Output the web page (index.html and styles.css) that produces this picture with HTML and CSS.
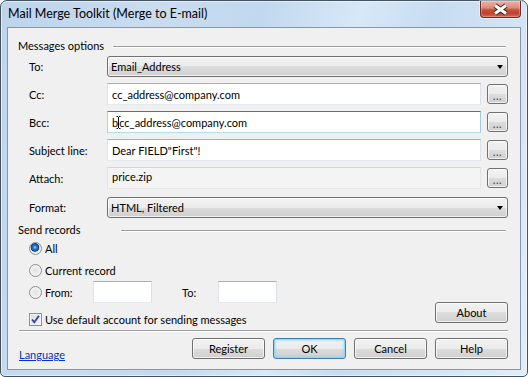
FILE: index.html
```html
<!DOCTYPE html>
<html>
<head>
<meta charset="utf-8">
<link rel="stylesheet" href="styles.css">
</head>
<body>
<div class="window">
  <div class="titlebar">
    <span class="title">Mail Merge Toolkit (Merge to E-mail)</span>
    <div class="close">
      <svg width="39" height="16" viewBox="0 0 39 16">
        <path d="M14 4.5 L25 12.5 M25 4.5 L14 12.5" stroke="#3b2622" stroke-width="5" fill="none"/>
        <path d="M14 4.5 L25 12.5 M25 4.5 L14 12.5" stroke="#ffffff" stroke-width="3" fill="none"/>
      </svg>
    </div>
  </div>
  <div class="client">
    <div class="hdr">
      <span class="hdr-label hdr-label-msg">Messages options</span>
      <span class="hdr-line"></span>
    </div>

    <div class="row row-first">
      <span class="lbl">To:</span>
      <div class="combo"><span class="combo-text">Email_Address</span><span class="arrow"></span></div>
    </div>

    <div class="row">
      <span class="lbl">Cc:</span>
      <div class="input">cc_address@company.com</div>
      <div class="btn dots">...</div>
    </div>

    <div class="row">
      <span class="lbl">Bcc:</span>
      <div class="input focused">b<svg class="ibeam" width="5" height="13" viewBox="0 0 5 13"><path d="M0.5 0.5 H2 M3 0.5 H4.5 M2.5 1 V12 M0.5 12.5 H2 M3 12.5 H4.5" stroke="#000" stroke-width="1" fill="none"/></svg>cc_address@company.com</div>
      <div class="btn dots">...</div>
    </div>

    <div class="row">
      <span class="lbl">Subject line:</span>
      <div class="input">Dear FIELD"First"!</div>
      <div class="btn dots">...</div>
    </div>

    <div class="row">
      <span class="lbl">Attach:</span>
      <div class="input disabled">price.zip</div>
      <div class="btn dots">...</div>
    </div>

    <div class="row row-format">
      <span class="lbl">Format:</span>
      <div class="combo"><span class="combo-text">HTML, Filtered</span><span class="arrow"></span></div>
    </div>

    <div class="hdr">
      <span class="hdr-label hdr-label-send">Send records</span>
      <span class="hdr-line"></span>
    </div>

    <div class="opt">
      <span class="radio checked"></span><span>All</span>
    </div>
    <div class="opt">
      <span class="radio"></span><span>Current record</span>
    </div>
    <div class="opt">
      <span class="radio"></span><span class="from-lbl">From:</span>
      <div class="input small"></div>
      <span class="to-lbl">To:</span>
      <div class="input small"></div>
    </div>

    <div class="check-row">
      <div class="check-item">
        <span class="checkbox">
          <svg width="11" height="11" viewBox="0 0 11 11"><path d="M2 5.5 L4.3 8.3 L9 1.8" stroke="#37479a" stroke-width="1.9" fill="none"/></svg>
        </span>
        <span>Use default account for sending messages</span>
      </div>
      <div class="btn push about">About</div>
    </div>

    <div class="sep"></div>

    <div class="bottom">
      <a class="link" href="#">Language</a>
      <div class="buttons">
        <div class="btn push">Register</div>
        <div class="btn push default">OK</div>
        <div class="btn push">Cancel</div>
        <div class="btn push">Help</div>
      </div>
    </div>
  </div>
</div>
</body>
</html>
```

FILE: styles.css
```css
html, body {
  margin: 0;
  padding: 0;
  background: #ffffff;
}

body {
  font-family: "Segoe UI", Lato, "Liberation Sans", sans-serif;
  font-size: 11px;
  color: #000000;
}

.window {
  box-sizing: border-box;
  width: 528px;
  height: 377px;
  border: 1px solid #45525f;
  border-radius: 7px 7px 5px 5px;
  background: linear-gradient(105deg, #bdd4eb 0%, #c9dcf0 25%, #c2d8ee 42%, #d7e8f7 58%, #c8dcf1 70%, #e0edf9 100%);
  box-shadow: inset 0 0 0 1px rgba(255, 255, 255, 0.55);
  padding: 0 6px 6px 6px;
  display: flex;
  flex-direction: column;
}

.titlebar {
  height: 26px;
  display: flex;
  align-items: flex-start;
  flex: none;
}

.title {
  line-height: 26px;
  padding-left: 1px;
  font-size: 12.5px;
  color: #000;
}

.close {
  box-sizing: border-box;
  margin-left: auto;
  width: 41px;
  height: 17px;
  border: 1px solid #6b2a22;
  border-top: none;
  border-radius: 0 0 4px 4px;
  background: linear-gradient(#eab3a7 0%, #dd8c7b 42%, #c8503b 55%, #c2422c 78%, #d26a54 100%);
  box-shadow: 0 0 0 1px rgba(255, 255, 255, 0.45), inset 0 0 0 1px rgba(255, 255, 255, 0.25);
}

.close svg {
  display: block;
}

.client {
  flex: 1;
  box-sizing: border-box;
  border: 1px solid #8796a8;
  background: #f0f0f0;
  padding: 10px 12px 0 10px;
  display: flex;
  flex-direction: column;
}

.hdr {
  display: flex;
  align-items: flex-start;
  height: 15px;
  line-height: 15px;
  flex: none;
}

.hdr-label {
  flex: none;
}

.hdr-label-msg {
  width: 95px;
}

.hdr-label-send {
  width: 103px;
}

.hdr-line {
  flex: 1;
  margin-top: 8px;
  margin-right: 2px;
  border-top: 1px solid #a0a0a0;
  border-bottom: 1px solid #ffffff;
}

.row {
  display: flex;
  align-items: center;
  height: 28px;
  padding-left: 11px;
  flex: none;
}

.row-first {
  height: 27px;
}

.row-format {
  height: 30px;
}

.lbl {
  width: 78px;
  flex: none;
}

.combo {
  box-sizing: border-box;
  flex: 1;
  height: 21px;
  border: 1px solid #707070;
  border-radius: 3px;
  background: linear-gradient(#f2f2f2 0%, #ebebeb 50%, #dddddd 50%, #cfcfcf 100%);
  box-shadow: inset 0 0 0 1px rgba(255, 255, 255, 0.7);
  display: flex;
  align-items: center;
  padding: 0 4px 0 3px;
}

.combo-text {
  flex: 1;
}

.arrow {
  width: 0;
  height: 0;
  border-left: 3.5px solid transparent;
  border-right: 3.5px solid transparent;
  border-top: 4px solid #000;
  margin-top: 1px;
}

.input {
  box-sizing: border-box;
  flex: 1;
  height: 22px;
  background: #ffffff;
  border: 1px solid;
  border-color: #abadb3 #dbdfe6 #e3e9ef #e2e3ea;
  padding: 0 4px;
  display: flex;
  align-items: center;
  white-space: nowrap;
}

.input.focused {
  border-color: #3d7bad #a4c9e3 #b7d9ed #b5cfe7;
}

.input.disabled {
  background: #f4f4f4;
  border-color: #d5d5d5 #e3e3e3 #e6e6e6 #e3e3e3;
  padding-bottom: 3px;
}

.ibeam {
  margin: 0 -2px 0 -2px;
  flex: none;
}

.btn {
  box-sizing: border-box;
  border: 1px solid #707070;
  border-radius: 3px;
  background: linear-gradient(#f2f2f2 0%, #ebebeb 50%, #dddddd 50%, #cfcfcf 100%);
  box-shadow: inset 0 0 0 1px rgba(252, 252, 252, 0.75);
  display: flex;
  align-items: center;
  justify-content: center;
  flex: none;
}

.dots {
  width: 21px;
  height: 20px;
  margin-left: 6px;
  padding-top: 3px;
  font-size: 11px;
  letter-spacing: 0.5px;
  color: #2a3a6a;
}

.opt {
  display: flex;
  align-items: center;
  height: 22px;
  padding-left: 11px;
  flex: none;
}

.radio {
  box-sizing: border-box;
  width: 13px;
  height: 13px;
  border-radius: 50%;
  border: 1px solid #8e8f8f;
  background: radial-gradient(circle at 50% 50%, #e2e2e2 0, #eeeeee 45%, #fbfbfb 100%);
  margin-right: 3px;
  flex: none;
}

.radio.checked {
  background: radial-gradient(circle at 45% 40%, #9fd7ff 0, #2c86d4 1.6px, #17569f 3.3px, #0f3f7a 4px, #dcdcdc 4.6px, #f0f0f0 5.5px, #fbfbfb 100%);
}

.from-lbl {
  width: 48px;
  flex: none;
}

.input.small {
  flex: none;
  width: 59px;
}

.to-lbl {
  width: 36px;
  margin-left: 30px;
  flex: none;
}

.check-row {
  display: flex;
  justify-content: space-between;
  height: 27px;
  padding-left: 11px;
  flex: none;
}

.check-item {
  align-self: flex-end;
  display: flex;
  align-items: center;
  height: 22px;
}

.checkbox {
  box-sizing: border-box;
  width: 13px;
  height: 13px;
  border: 1px solid #8f8f8f;
  background: linear-gradient(135deg, #dcdcdc 0%, #f6f6f6 100%);
  box-shadow: inset 0 0 0 1px #f4f4f4;
  display: flex;
  align-items: center;
  justify-content: center;
  margin-right: 3px;
  flex: none;
}

.checkbox svg {
  display: block;
}

.push {
  width: 73px;
  height: 21px;
}

.about {
  align-self: flex-start;
  margin-top: -1px;
}

.sep {
  margin-left: 1px;
  border-top: 1px solid #a0a0a0;
  border-bottom: 1px solid #ffffff;
  flex: none;
}

.bottom {
  display: flex;
  justify-content: space-between;
  height: 31px;
  flex: none;
}

.link {
  align-self: flex-end;
  margin-left: 1px;
  line-height: 16px;
  color: #0033cc;
  text-decoration: underline;
}

.buttons {
  display: flex;
  gap: 8px;
  padding-top: 6px;
  align-self: flex-start;
}

.btn.default {
  border-color: #3c7fb1;
  box-shadow: inset 0 0 0 1px #8fd8f8, inset 0 0 2px 2px rgba(120, 210, 250, 0.4);
}
```
